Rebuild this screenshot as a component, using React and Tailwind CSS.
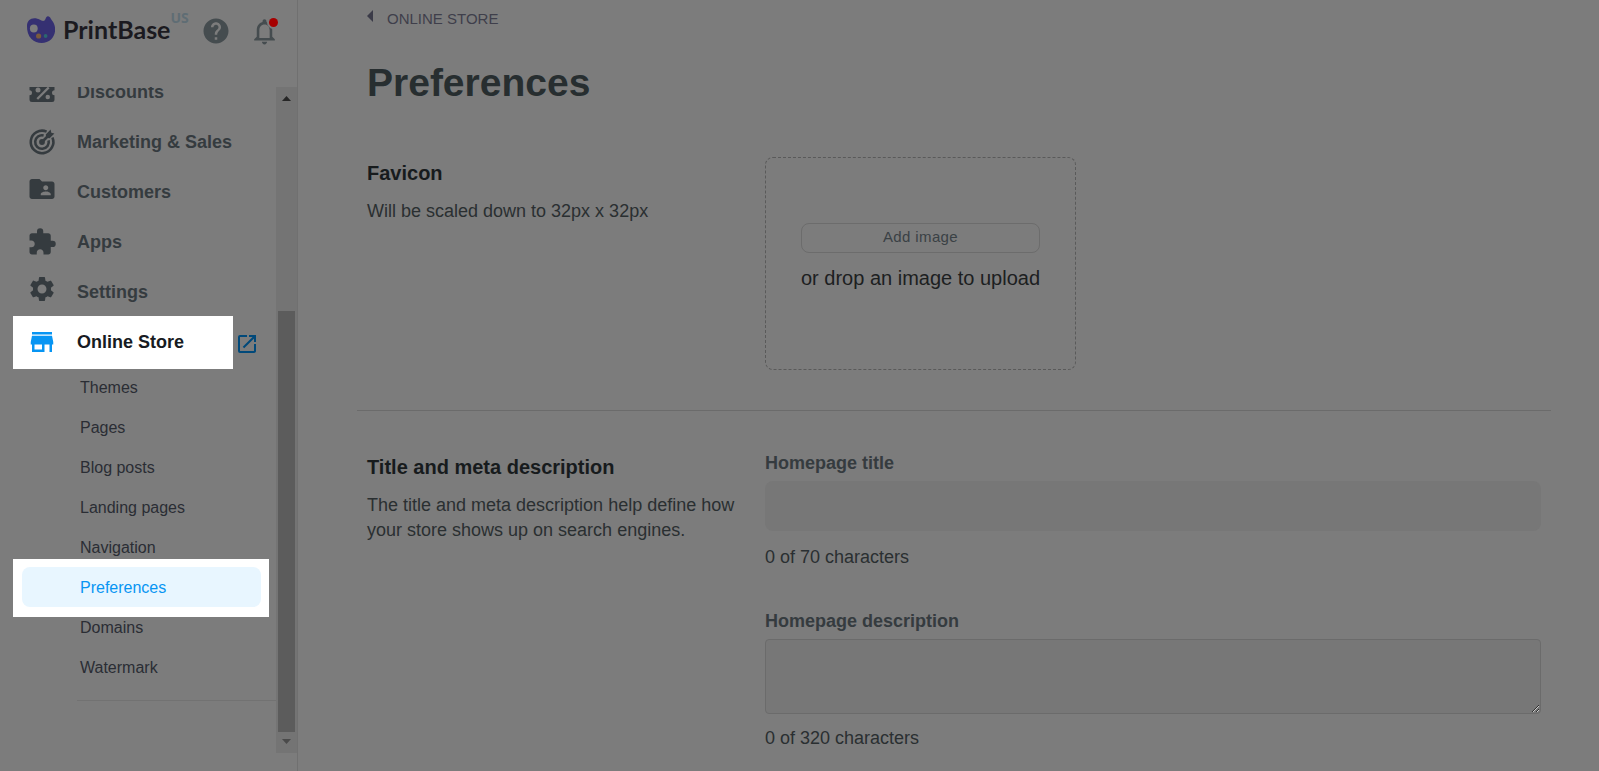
import React, { useState } from 'react';
import { MdExtension, MdFolderShared, MdHelp, MdNotificationsNone, MdOpenInNew, MdSettings, MdStore } from 'react-icons/md';

function TicketIcon({ size }) {
  return (
    <svg width={size} height={size} viewBox="0 0 24 24">
      <path d="M4 5A2 2 0 0 0 2 7V10.500A2 2 0 0 1 2 14.500V18A2 2 0 0 0 4 20H20A2 2 0 0 0 22 18V14.500A2 2 0 0 1 22 10.500V7A2 2 0 0 0 20 5Z" fill="currentColor" />
      <path d="M8.200 17.600L17.400 8.400" stroke="#7c7c7c" strokeWidth="1.900" />
      <circle cx="8.800" cy="10.400" r="2" fill="#7c7c7c" />
      <circle cx="16.600" cy="16" r="1.800" fill="#7c7c7c" />
    </svg>
  );
}

function TargetIcon({ size }) {
  return (
    <svg width={size} height={size} viewBox="0 0 30 30" fill="none" stroke="currentColor" strokeWidth="2.6">
      <path d="M19.600 4.600A11.300 11.300 0 1 0 25.400 10.400" />
      <path d="M16.600 8.400A6.800 6.800 0 1 0 21.600 13.400" />
      <circle cx="15" cy="15" r="2.900" fill="currentColor" stroke="none" />
      <path d="M15 15L22 8" />
      <path d="M18.800 7.600L23.600 2.600L24.300 5.700L27.400 6.400L22.600 11.200L19.200 10.800Z" fill="currentColor" stroke="none" />
    </svg>
  );
}

function Logo() {
  return (
    <svg width="28" height="28" viewBox="0 0 28 28">
      <path d="M0 10C0 5 3 2.200 7.500 2.200C12 2.200 14.500 5.600 17 4.800C19 4.100 18.200 .8 21 .3C22.800 .2 23.500 2.500 25 4.500C29.500 10 29.200 18.500 24 23.500C19 28.200 9.500 28 4.500 23C1 19.500 0 15 0 10Z" fill="#353072" />
      <circle cx="6.800" cy="12.500" r="3.900" fill="#7c7c7c" />
      <circle cx="11.600" cy="20" r="2.600" fill="#7a5a3d" />
      <circle cx="18.600" cy="20" r="1.900" fill="#2b6670" />
    </svg>
  );
}

const menu = [
  { label: 'Discounts', icon: TicketIcon },
  { label: 'Marketing & Sales', icon: TargetIcon },
  { label: 'Customers', icon: MdFolderShared, raised: true },
  { label: 'Apps', icon: MdExtension },
  { label: 'Settings', icon: MdSettings, raised: true },
];

const storeMenu = ['Themes', 'Pages', 'Blog posts', 'Landing pages', 'Navigation', 'Preferences', 'Domains', 'Watermark'];

function Header() {
  return (
    <header className="flex h-[87px] shrink-0 items-start pl-[27px] pt-4">
      <a href="#home" className="flex items-start">
        <Logo />
        <span className="ml-2 font-[Lato] text-[25px] font-bold leading-[26px] text-[#1b1a20]">PrintBase</span>
        <sup className="top-0 -mt-1.5 font-['Open_Sans'] text-sm font-bold leading-4 text-[#5f6d74]">US</sup>
      </a>
      <button aria-label="Help" className="ml-3 text-[#454c4f]">
        <MdHelp size={30} />
      </button>
      <button aria-label="Notifications" className="relative ml-[18px] text-[#454c4f]">
        <MdNotificationsNone size={31} />
        <span className="absolute right-0.5 top-0.5 size-[9px] rounded-full bg-[#a60000] ring-2 ring-[#7c7c7c]" />
      </button>
    </header>
  );
}

function Sidebar() {
  return (
    <aside className="flex w-[298px] shrink-0 flex-col border-r border-[#707070] pb-[18px]">
      <Header />
      <div className="flex min-h-0 flex-1">
        <nav className="min-w-0 flex-1 overflow-hidden">
          <ul className="-mt-5">
            {menu.map(({ label, icon: Icon, raised }) => (
              <li key={label}>
                <a href="#menu" className="flex h-[50px] items-center gap-5 pl-[27px] text-lg font-bold text-[#353b3f]">
                  <span className={raised ? 'pb-1.5' : ''}>
                    <Icon size={30} />
                  </span>
                  {label}
                </a>
              </li>
            ))}
            <li className="relative flex h-[50px] items-center">
              <span className="absolute -bottom-0.5 -top-px left-[13px] w-[220px] bg-white" />
              <a href="#store" className="relative flex w-[235px] items-center gap-5 pl-[27px] text-lg font-bold text-[#171b22]">
                <MdStore size={30} className="text-[#0795f3]" />
                Online Store
              </a>
              <a href="#open" aria-label="Open store" className="pt-1 text-[#00497a]">
                <MdOpenInNew size={24} />
              </a>
            </li>
          </ul>
          <ul className="ml-[22px] w-[239px]">
            {storeMenu.map((item) =>
              item === 'Preferences' ? (
                <li key={item} className="relative">
                  <span className="absolute -bottom-2.5 -left-[9px] -right-2 -top-2 bg-white" />
                  <a href="#preferences" className="relative block h-10 rounded-lg bg-[#e8f6ff] pl-[58px] text-base leading-[42px] text-[#0795f3]">
                    {item}
                  </a>
                </li>
              ) : (
                <li key={item}>
                  <a href="#page" className="block h-10 pl-[58px] text-base leading-[42px] text-[#2a2d34]">{item}</a>
                </li>
              )
            )}
          </ul>
          <hr className="ml-[77px] mt-[13px] border-[#727272]" />
        </nav>
        <div className="flex w-[21px] flex-col items-center bg-[#747474]">
          <svg width="21" height="21" viewBox="0 0 21 21"><path d="M6 14L10.500 9L15 14Z" fill="#262626" /></svg>
          <div className="mt-auto h-[421px] w-[17px] bg-[#5c5c5c]" />
          <svg width="21" height="21" viewBox="0 0 21 21"><path d="M6 7L15 7L10.500 12Z" fill="#4a4a4a" /></svg>
        </div>
      </div>
    </aside>
  );
}

function App() {
  const [title, setTitle] = useState('');
  const [description, setDescription] = useState('');

  return (
    <div className="flex h-screen overflow-hidden bg-[#7c7c7c] font-['Liberation_Sans',Arial,sans-serif]">
      <Sidebar />
      <main className="min-w-0 flex-1 pl-[59px] pr-12">
        <div className="px-2.5 pt-[9px]">
          <a href="#store" className="flex items-start gap-3.5 text-[15px] leading-5 text-[#3f3f4b]">
            <svg width="6" height="14" viewBox="0 0 6 14"><path d="M6 1V13L0 7Z" fill="#3b3b48" /></svg>
            ONLINE STORE
          </a>
          <h1 className="mt-7 text-[39px] font-bold leading-[52px] text-[#272e30]">Preferences</h1>
        </div>

        <section className="grid grid-cols-3 pb-10 pt-12">
          <div className="px-2.5">
            <h2 className="text-xl font-bold leading-8 text-[#171b1d]">Favicon</h2>
            <p className="mt-2.5 text-lg leading-[25px] text-[#2a2f31]">Will be scaled down to 32px x 32px</p>
          </div>
          <div className="col-span-2 px-2.5">
            <div className="flex h-[213px] w-[311px] flex-col items-center justify-center rounded-lg border border-dashed border-[#5a5a5a] pb-3">
              <button className="h-[30px] w-[239px] rounded-lg border border-[#6c6c6c] text-[15px] tracking-wide text-[#3a4145]">Add image</button>
              <p className="mt-2.5 text-xl leading-[30px] text-[#1c2021]">or drop an image to upload</p>
            </div>
          </div>
        </section>

        <hr className="border-[#6b6b6b]" />

        <section className="grid grid-cols-3 pt-10">
          <div className="px-2.5">
            <h2 className="text-xl font-bold leading-8 text-[#171b1d]">Title and meta description</h2>
            <p className="mt-2.5 text-lg leading-[25px] text-[#2a2f31]">The title and meta description help define how your store shows up on search engines.</p>
          </div>
          <div className="col-span-2 px-2.5">
            <label htmlFor="title" className="block pb-1.5 text-lg font-bold leading-6 text-[#353b3f]">Homepage title</label>
            <input
              id="title"
              type="text"
              value={title}
              onChange={(e) => setTitle(e.target.value)}
              className="block h-[50px] w-full rounded-lg bg-[#777777] px-4 outline-none"
            />
            <p className="mt-3.5 text-lg leading-[25px] text-[#2a2f31]">{title.length} of 70 characters</p>
            <label htmlFor="description" className="mt-[39px] block pb-1.5 text-lg font-bold leading-6 text-[#353b3f]">Homepage description</label>
            <textarea
              id="description"
              value={description}
              onChange={(e) => setDescription(e.target.value)}
              className="block h-[75px] w-full rounded border border-[#6b6b6b] bg-[#777777] px-4 outline-none"
            />
            <p className="mt-3 text-lg leading-[25px] text-[#2a2f31]">{description.length} of 320 characters</p>
          </div>
        </section>
      </main>
    </div>
  );
}

export default App;
